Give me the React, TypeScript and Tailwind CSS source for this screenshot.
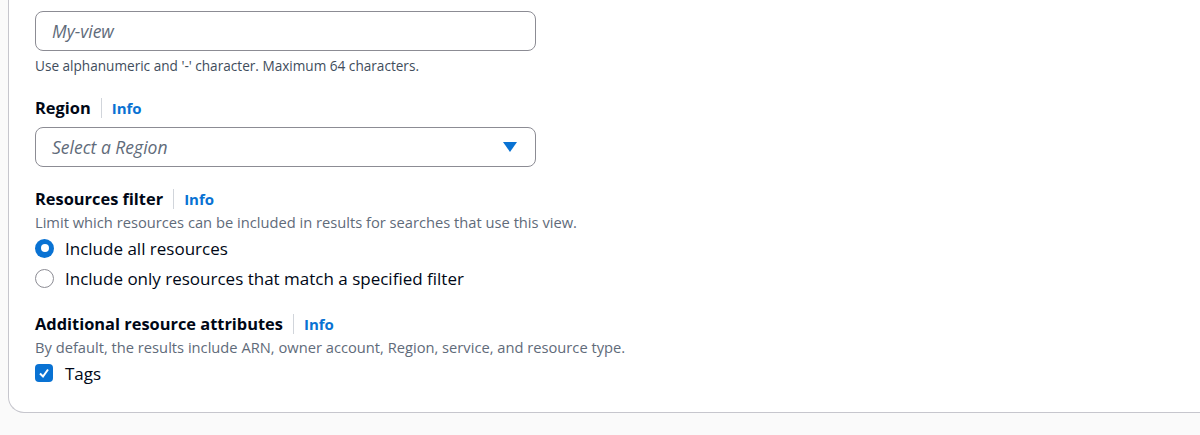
import React from 'react'

const font = { fontFamily: '"Open Sans", sans-serif' }

function Label({ text }: { text: string }) {
  return (
    <div className="flex items-center h-6">
      <span className="text-[16.4px] font-bold text-[#000716]">{text}</span>
      <span className="mx-[10px] h-[20px] w-px bg-[#d1d5db]" />
      <a className="text-[15px] font-bold text-[#0972d3]">Info</a>
    </div>
  )
}

function Radio({ checked, label }: { checked?: boolean; label: string }) {
  return (
    <label className="flex items-center h-[30px]">
      {checked ? (
        <span className="flex items-center justify-center w-[19px] h-[19px] rounded-full bg-[#0972d3]">
          <span className="w-[8px] h-[8px] rounded-full bg-white" />
        </span>
      ) : (
        <span className="w-[19px] h-[19px] rounded-full border-[1.5px] border-[#8c8c94] bg-white" />
      )}
      <span className="ml-[11px] text-[17px] text-[#000716]">{label}</span>
    </label>
  )
}

export default function App() {
  return (
    <div className="w-[1200px] h-[435px] overflow-hidden bg-[#fafafa]" style={font}>
      <div className="ml-2 w-[1300px] h-[413px] bg-white border-l border-b border-[#c6c6cd] rounded-bl-2xl pl-[26px] pt-[11px]">
        <div className="w-[501px] h-[40px] rounded-lg border border-[#8c8c94] flex items-center px-4">
          <span className="italic text-[17.5px] text-[#5f6b7a]">My-view</span>
        </div>
        <div className="mt-[5px] text-[13.6px] text-[#414d5c]">Use alphanumeric and '-' character. Maximum 64 characters.</div>

        <div className="mt-[20px]">
          <Label text="Region" />
        </div>
        <div className="mt-[7px] w-[501px] h-[40px] rounded-lg border border-[#8c8c94] flex items-center justify-between pl-4 pr-[18px]">
          <span className="italic text-[17.5px] text-[#5f6b7a]">Select a Region</span>
          <svg width="14" height="10" viewBox="0 0 14 10">
            <path d="M0 0 H14 L7 10 Z" fill="#0972d3" />
          </svg>
        </div>

        <div className="mt-[20px]">
          <Label text="Resources filter" />
        </div>
        <div className="mt-[1px] text-[14.7px] text-[#5f6b7a] leading-5">Limit which resources can be included in results for searches that use this view.</div>
        <div className="mt-[1px]">
          <Radio checked label="Include all resources" />
          <Radio label="Include only resources that match a specified filter" />
        </div>

        <div className="mt-[19px]">
          <Label text="Additional resource attributes" />
        </div>
        <div className="mt-[1px] text-[14.7px] text-[#5f6b7a] leading-5">By default, the results include ARN, owner account, Region, service, and resource type.</div>
        <label className="mt-[3px] flex items-center h-[26px]">
          <span className="flex items-center justify-center w-[18px] h-[18px] rounded-[4px] bg-[#0972d3]">
            <svg width="12" height="12" viewBox="0 0 12 12">
              <path d="M2 6.5 L5 9.5 L10 2.5" stroke="white" strokeWidth="2" fill="none" />
            </svg>
          </span>
          <span className="ml-[12px] text-[17px] text-[#000716]">Tags</span>
        </label>
      </div>
    </div>
  )
}
